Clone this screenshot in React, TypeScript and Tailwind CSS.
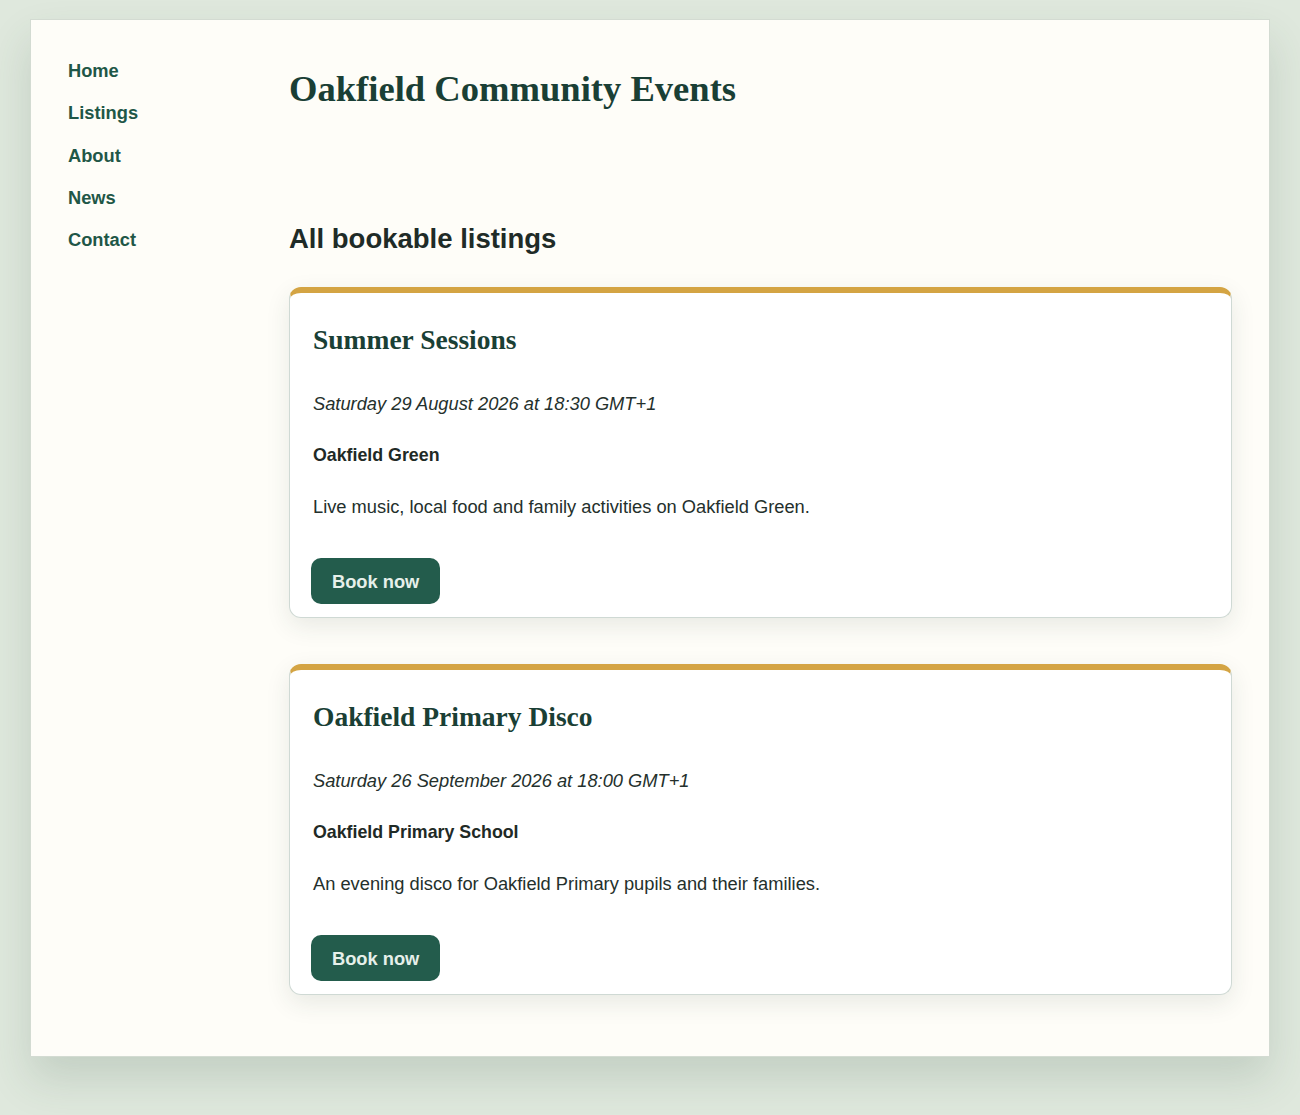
import React from "react";

interface Listing {
  title: string;
  when: string;
  venue: string;
  blurb: string;
}

const navItems = ["Home", "Listings", "About", "News", "Contact"];

const listings: Listing[] = [
  {
    title: "Summer Sessions",
    when: "Saturday 29 August 2026 at 18:30 GMT+1",
    venue: "Oakfield Green",
    blurb: "Live music, local food and family activities on Oakfield Green.",
  },
  {
    title: "Oakfield Primary Disco",
    when: "Saturday 26 September 2026 at 18:00 GMT+1",
    venue: "Oakfield Primary School",
    blurb: "An evening disco for Oakfield Primary pupils and their families.",
  },
];

function ListingCard({ item }: { item: Listing }) {
  return (
    <article className="rounded-xl border border-[#cfd9d4] border-t-[6px] border-t-[#d4a443] bg-white pl-[23px] pr-6 pt-[31px] pb-[13px] shadow-[0_8px_24px_rgba(40,60,50,0.10)]">
      <h3 className="font-['Liberation_Serif',serif] text-[27.5px] font-bold leading-[31px] text-[#1a3f35]">
        {item.title}
      </h3>
      <p className="mt-[35px] text-[18.3px] italic leading-[27px] text-[#24302c]">
        {item.when}
      </p>
      <p className="mt-[25px] text-[17.8px] font-bold leading-[27px] text-[#1f2a26]">
        {item.venue}
      </p>
      <p className="mt-[24px] text-[18.3px] leading-[27px] text-[#24302c]">
        {item.blurb}
      </p>
      <button className="-ml-0.5 mt-[38px] rounded-[10px] bg-[#235c4c] px-[21px] py-[9.5px] text-[18.3px] font-bold leading-[27px] text-[#e6f0ea]">
        Book now
      </button>
    </article>
  );
}

export default function App() {
  return (
    <div className="min-h-[1115px] bg-[#dfe8dd] pt-[19px] font-['Liberation_Sans',Arial,sans-serif]">
      <div className="mx-auto flex w-[1240px] border border-[#d3dbd2] bg-[#fefdf8] pb-[61px] pl-[37px] pr-[37px] pt-[37px] shadow-[0_22px_40px_rgba(50,80,60,0.16)]">
        {/* Side navigation */}
        <nav className="w-[221px] shrink-0">
          <ul className="flex flex-col gap-[15.3px]">
            {navItems.map((n) => (
              <li key={n}>
                <a className="text-[18.3px] font-bold leading-[27px] text-[#1f5747]" href="#">
                  {n}
                </a>
              </li>
            ))}
          </ul>
        </nav>

        {/* Main column */}
        <main className="min-w-0 flex-1">
          <h1 className="mt-[10px] font-['Liberation_Serif',serif] text-[36.6px] font-bold leading-[43px] text-[#1a3f35]">
            Oakfield Community Events
          </h1>
          <h2 className="mt-[113px] text-[27.5px] font-bold leading-[31px] text-[#1f2b27]">
            All bookable listings
          </h2>
          <div className="mt-[33px] flex flex-col gap-[46px]">
            {listings.map((l) => (
              <ListingCard key={l.title} item={l} />
            ))}
          </div>
        </main>
      </div>
    </div>
  );
}
